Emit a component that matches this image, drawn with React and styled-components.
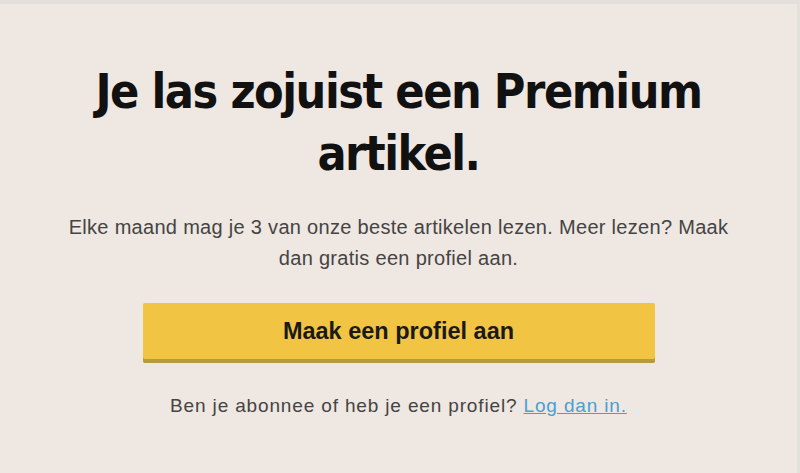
import React from 'react'
import styled, { createGlobalStyle } from 'styled-components'

const Global = createGlobalStyle`
  html, body {
    margin:0;
    padding:0;
    background:#efe7e1;
  }
`

const Panel = styled.div`
  box-sizing:border-box;
  width:800px;
  height:473px;
  background:#efe7e1;
  border-top:4px solid #e2dfdc;
  border-right:3px solid #e4e0dc;
  display:flex;
  flex-direction:column;
  align-items:center;
  padding-top:56px;
`

const Title = styled.h1`
  margin:0;
  font-family:"DejaVu Sans Condensed", "DejaVu Sans", sans-serif;
  font-stretch:condensed;
  font-weight:bold;
  font-size:48px;
  line-height:62px;
  color:#111;
  text-align:center;
  width:640px;
  letter-spacing:-1.45px;
`

const Lead = styled.p`
  margin:28px 0 0;
  font-family:"Liberation Sans", Arial, sans-serif;
  font-size:20px;
  line-height:31px;
  letter-spacing:0.3px;
  color:#444;
  text-align:center;
  width:690px;
`

const Button = styled.button`
  margin-top:29px;
  width:512px;
  height:60px;
  border:none;
  border-radius:2px;
  background:#f2c443;
  box-shadow:inset 0 -4px 0 #b89a3c;
  font-family:"Liberation Sans", Arial, sans-serif;
  font-weight:bold;
  font-size:23.5px;
  color:#1a1a1a;
  padding:0 0 4px;
  cursor:pointer;
`

const Note = styled.p`
  margin:32px 0 0;
  font-family:"Liberation Sans", Arial, sans-serif;
  font-size:19px;
  letter-spacing:0.85px;
  color:#444;
  text-align:center;
`

const Link = styled.a`
  color:#4a9fd3;
  text-decoration:underline;
`

export default function App() {
  return (
    <>
      <Global />
      <Panel>
        <Title>Je las zojuist een Premium artikel.</Title>
        <Lead>
          Elke maand mag je 3 van onze beste artikelen lezen. Meer lezen? Maak dan gratis een profiel aan.
        </Lead>
        <Button>Maak een profiel aan</Button>
        <Note>
          Ben je abonnee of heb je een profiel? <Link href="#">Log dan in.</Link>
        </Note>
      </Panel>
    </>
  )
}
